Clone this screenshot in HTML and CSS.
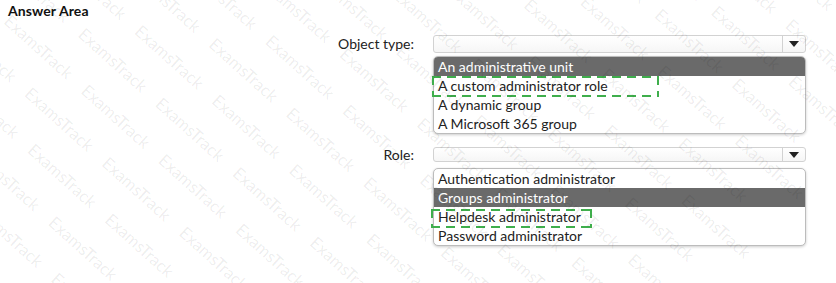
FILE: index.html
```html
<!DOCTYPE html>
<html lang="en">
<head>
    <meta charset="UTF-8">
    <title>Answer Area</title>
    <link rel="stylesheet" href="styles.css">
</head>
<body>
    <div class="page">
        <div class="title">Answer Area</div>

        <div class="field first">
            <div class="label tall">Object type:</div>
            <div class="control near">
                <div class="select tall">
                    <div class="select-value"></div>
                    <div class="select-btn"><span class="arrow"></span></div>
                </div>
                <ul class="list">
                    <li class="option selected top">An administrative unit</li>
                    <li class="option">A custom administrator role<span class="marker wide"></span></li>
                    <li class="option">A dynamic group</li>
                    <li class="option">A Microsoft 365 group</li>
                </ul>
            </div>
        </div>

        <div class="field second">
            <div class="label short">Role:</div>
            <div class="control far">
                <div class="select short">
                    <div class="select-value"></div>
                    <div class="select-btn"><span class="arrow"></span></div>
                </div>
                <ul class="list">
                    <li class="option">Authentication administrator</li>
                    <li class="option selected">Groups administrator</li>
                    <li class="option">Helpdesk administrator<span class="marker narrow"></span></li>
                    <li class="option">Password administrator</li>
                </ul>
            </div>
        </div>

        <!-- watermark over everything -->
        <div class="watermark" aria-hidden="true">
            <div class="wm-lines">
                <p>ExamsTrack ExamsTrack ExamsTrack ExamsTrack ExamsTrack ExamsTrack ExamsTrack ExamsTrack ExamsTrack ExamsTrack ExamsTrack ExamsTrack</p>
                <p>ExamsTrack ExamsTrack ExamsTrack ExamsTrack ExamsTrack ExamsTrack ExamsTrack ExamsTrack ExamsTrack ExamsTrack ExamsTrack ExamsTrack</p>
                <p>ExamsTrack ExamsTrack ExamsTrack ExamsTrack ExamsTrack ExamsTrack ExamsTrack ExamsTrack ExamsTrack ExamsTrack ExamsTrack ExamsTrack</p>
                <p>ExamsTrack ExamsTrack ExamsTrack ExamsTrack ExamsTrack ExamsTrack ExamsTrack ExamsTrack ExamsTrack ExamsTrack ExamsTrack ExamsTrack</p>
                <p>ExamsTrack ExamsTrack ExamsTrack ExamsTrack ExamsTrack ExamsTrack ExamsTrack ExamsTrack ExamsTrack ExamsTrack ExamsTrack ExamsTrack</p>
                <p>ExamsTrack ExamsTrack ExamsTrack ExamsTrack ExamsTrack ExamsTrack ExamsTrack ExamsTrack ExamsTrack ExamsTrack ExamsTrack ExamsTrack</p>
                <p>ExamsTrack ExamsTrack ExamsTrack ExamsTrack ExamsTrack ExamsTrack ExamsTrack ExamsTrack ExamsTrack ExamsTrack ExamsTrack ExamsTrack</p>
                <p>ExamsTrack ExamsTrack ExamsTrack ExamsTrack ExamsTrack ExamsTrack ExamsTrack ExamsTrack ExamsTrack ExamsTrack ExamsTrack ExamsTrack</p>
                <p>ExamsTrack ExamsTrack ExamsTrack ExamsTrack ExamsTrack ExamsTrack ExamsTrack ExamsTrack ExamsTrack ExamsTrack ExamsTrack ExamsTrack</p>
                <p>ExamsTrack ExamsTrack ExamsTrack ExamsTrack ExamsTrack ExamsTrack ExamsTrack ExamsTrack ExamsTrack ExamsTrack ExamsTrack ExamsTrack</p>
                <p>ExamsTrack ExamsTrack ExamsTrack ExamsTrack ExamsTrack ExamsTrack ExamsTrack ExamsTrack ExamsTrack ExamsTrack ExamsTrack ExamsTrack</p>
                <p>ExamsTrack ExamsTrack ExamsTrack ExamsTrack ExamsTrack ExamsTrack ExamsTrack ExamsTrack ExamsTrack ExamsTrack ExamsTrack ExamsTrack</p>
                <p>ExamsTrack ExamsTrack ExamsTrack ExamsTrack ExamsTrack ExamsTrack ExamsTrack ExamsTrack ExamsTrack ExamsTrack ExamsTrack ExamsTrack</p>
                <p>ExamsTrack ExamsTrack ExamsTrack ExamsTrack ExamsTrack ExamsTrack ExamsTrack ExamsTrack ExamsTrack ExamsTrack ExamsTrack ExamsTrack</p>
                <p>ExamsTrack ExamsTrack ExamsTrack ExamsTrack ExamsTrack ExamsTrack ExamsTrack ExamsTrack ExamsTrack ExamsTrack ExamsTrack ExamsTrack</p>
                <p>ExamsTrack ExamsTrack ExamsTrack ExamsTrack ExamsTrack ExamsTrack ExamsTrack ExamsTrack ExamsTrack ExamsTrack ExamsTrack ExamsTrack</p>
                <p>ExamsTrack ExamsTrack ExamsTrack ExamsTrack ExamsTrack ExamsTrack ExamsTrack ExamsTrack ExamsTrack ExamsTrack ExamsTrack ExamsTrack</p>
                <p>ExamsTrack ExamsTrack ExamsTrack ExamsTrack ExamsTrack ExamsTrack ExamsTrack ExamsTrack ExamsTrack ExamsTrack ExamsTrack ExamsTrack</p>
                <p>ExamsTrack ExamsTrack ExamsTrack ExamsTrack ExamsTrack ExamsTrack ExamsTrack ExamsTrack ExamsTrack ExamsTrack ExamsTrack ExamsTrack</p>
                <p>ExamsTrack ExamsTrack ExamsTrack ExamsTrack ExamsTrack ExamsTrack ExamsTrack ExamsTrack ExamsTrack ExamsTrack ExamsTrack ExamsTrack</p>
                <p>ExamsTrack ExamsTrack ExamsTrack ExamsTrack ExamsTrack ExamsTrack ExamsTrack ExamsTrack ExamsTrack ExamsTrack ExamsTrack ExamsTrack</p>
                <p>ExamsTrack ExamsTrack ExamsTrack ExamsTrack ExamsTrack ExamsTrack ExamsTrack ExamsTrack ExamsTrack ExamsTrack ExamsTrack ExamsTrack</p>
                <p>ExamsTrack ExamsTrack ExamsTrack ExamsTrack ExamsTrack ExamsTrack ExamsTrack ExamsTrack ExamsTrack ExamsTrack ExamsTrack ExamsTrack</p>
                <p>ExamsTrack ExamsTrack ExamsTrack ExamsTrack ExamsTrack ExamsTrack ExamsTrack ExamsTrack ExamsTrack ExamsTrack ExamsTrack ExamsTrack</p>
                <p>ExamsTrack ExamsTrack ExamsTrack ExamsTrack ExamsTrack ExamsTrack ExamsTrack ExamsTrack ExamsTrack ExamsTrack ExamsTrack ExamsTrack</p>
                <p>ExamsTrack ExamsTrack ExamsTrack ExamsTrack ExamsTrack ExamsTrack ExamsTrack ExamsTrack ExamsTrack ExamsTrack ExamsTrack ExamsTrack</p>
            </div>
        </div>
    </div>
</body>
</html>
```

FILE: styles.css
```css
/* Answer area with two open dropdowns */
body {
    margin: 0;
    background: #fff;
    font-family: Lato, "Open Sans", sans-serif;
    color: #222;
}

.page {
    position: relative;
    width: 836px;
    height: 283px;
    overflow: hidden;
}

.title {
    padding: 2px 0 0 8px;
    height: 16px;
    font-size: 14px;
    font-weight: bold;
    color: #111;
    letter-spacing: 0.1px;
}

.field {
    display: grid;
    grid-template-columns: 414px 373px;
    column-gap: 19px;
}

.field.first {
    margin-top: 17px;
}

.field.second {
    margin-top: 13px;
}

.label {
    text-align: right;
    font-size: 14px;
    color: #222;
}

.label.tall {
    line-height: 18px;
}

.label.short {
    line-height: 15px;
}

.control {
    display: flex;
    flex-direction: column;
}

.control.near {
    gap: 3px;
}

.control.far {
    gap: 6px;
}

.select {
    display: flex;
    box-sizing: border-box;
    border: 1px solid #d2d2d2;
    border-radius: 3px;
    background: linear-gradient(#fff, #f6f6f6);
}

.select.tall {
    height: 18px;
}

.select.short {
    height: 15px;
}

.select-value {
    flex: 1;
}

.select-btn {
    width: 22px;
    border-left: 1px solid #d2d2d2;
    display: flex;
    align-items: center;
    justify-content: center;
}

.arrow {
    width: 0;
    height: 0;
    border-left: 5px solid transparent;
    border-right: 5px solid transparent;
    border-top: 6px solid #222;
}

.list {
    list-style: none;
    margin: 0;
    padding: 0;
    border: 1px solid #bcbcbc;
    border-radius: 5px;
    box-shadow: 0 1px 3px rgba(0, 0, 0, 0.2);
    background: #fff;
}

.option {
    position: relative;
    height: 19px;
    line-height: 19px;
    padding-left: 4px;
    font-size: 14px;
    color: #222;
    white-space: nowrap;
}

.option.selected {
    background: #6a6a6a;
    color: #fff;
}

.option.top {
    border-radius: 4px 4px 0 0;
}

/* dashed answer box, dashes drawn with gradients for longer strokes */
.marker {
    position: absolute;
    background:
        repeating-linear-gradient(90deg, #3fae4c 0 9px, transparent 9px 15px) top left / 100% 2px no-repeat,
        repeating-linear-gradient(90deg, #3fae4c 0 9px, transparent 9px 15px) bottom left / 100% 2px no-repeat,
        repeating-linear-gradient(180deg, #3fae4c 0 9px, transparent 9px 15px) top left / 2px 100% no-repeat,
        repeating-linear-gradient(180deg, #3fae4c 0 9px, transparent 9px 15px) top right / 2px 100% no-repeat;
}

.marker.wide {
    left: -2px;
    top: 0;
    width: 227px;
    height: 21px;
}

.marker.narrow {
    left: -3px;
    top: 2px;
    width: 161px;
    height: 19px;
}

.watermark {
    position: absolute;
    inset: 0;
    pointer-events: none;
}

.wm-lines {
    position: absolute;
    left: -400px;
    top: -560px;
    width: 1700px;
    transform: rotate(42deg);
    transform-origin: center;
}

.wm-lines p {
    margin: 0;
    height: 40px;
    line-height: 40px;
    font-size: 17px;
    word-spacing: 14px;
    color: rgba(0, 0, 0, 0.075);
    white-space: nowrap;
}

.wm-lines p:nth-child(even) {
    padding-left: 40px;
}
```
